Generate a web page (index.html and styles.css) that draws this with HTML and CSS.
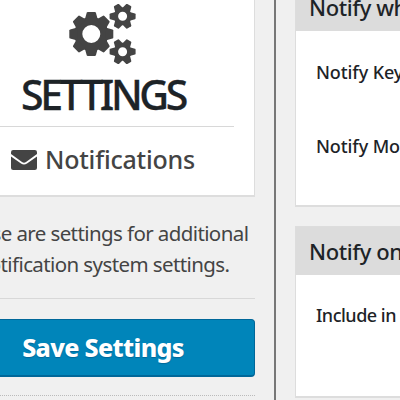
FILE: index.html
```html
<!DOCTYPE html>
<html lang="en">
<head>
    <meta charset="UTF-8">
    <meta name="viewport" content="width=device-width, initial-scale=1.0">
    <title>Settings - Notifications</title>
    <link rel="stylesheet" href="styles.css">
</head>
<body>
    <div class="sidebar">
        <div class="card">
            <svg class="cogs" width="68" height="62" viewBox="0 0 68 62">
                <defs>
                    <path id="tooth-lg" d="M-6.6 -14 L-4.6 -21.2 Q-4.3 -22 -3.5 -22 H3.5 Q4.3 -22 4.6 -21.2 L6.6 -14 Z"/>
                    <path id="tooth-sm" d="M-4.4 -7 L-2.9 -12.4 Q-2.7 -13 -2 -13 H2 Q2.7 -13 2.9 -12.4 L4.4 -7 Z"/>
                    <g id="cog-sm">
                        <circle r="6.7" fill="none" stroke="#444" stroke-width="4.4"/>
                        <use href="#tooth-sm" transform="rotate(30)"/>
                        <use href="#tooth-sm" transform="rotate(90)"/>
                        <use href="#tooth-sm" transform="rotate(150)"/>
                        <use href="#tooth-sm" transform="rotate(210)"/>
                        <use href="#tooth-sm" transform="rotate(270)"/>
                        <use href="#tooth-sm" transform="rotate(330)"/>
                    </g>
                </defs>
                <g fill="#444">
                    <g transform="translate(22.3 31)">
                        <circle r="13" fill="none" stroke="#444" stroke-width="8"/>
                        <use href="#tooth-lg"/>
                        <use href="#tooth-lg" transform="rotate(45)"/>
                        <use href="#tooth-lg" transform="rotate(90)"/>
                        <use href="#tooth-lg" transform="rotate(135)"/>
                        <use href="#tooth-lg" transform="rotate(180)"/>
                        <use href="#tooth-lg" transform="rotate(225)"/>
                        <use href="#tooth-lg" transform="rotate(270)"/>
                        <use href="#tooth-lg" transform="rotate(315)"/>
                    </g>
                    <use href="#cog-sm" transform="translate(53.6 13.3)"/>
                    <use href="#cog-sm" transform="translate(53.6 48.7)"/>
                </g>
            </svg>
            <h1 class="title">SETTINGS</h1>
            <h2 class="subtitle">
                <svg class="envelope" width="26" height="20" viewBox="0 0 26 20">
                    <path fill="#444" d="M2.2 0 H23.8 Q26 0 26 2.2 V4 L15 12 Q13 13.4 11 12 L0 4 V2.2 Q0 0 2.2 0 Z"/>
                    <path fill="#444" d="M0 6.6 L10 13.6 Q13 15.6 16 13.6 L26 6.6 V18 Q26 20 23.8 20 H2.2 Q0 20 0 18 Z"/>
                </svg>
                <span>Notifications</span>
            </h2>
        </div>
        <p class="description">These are settings for additional<br>notification system settings.</p>
        <div class="actions">
            <button class="save-button">Save Settings</button>
        </div>
    </div>

    <div class="main">
        <div class="panel">
            <h3 class="panel-title">Notify when</h3>
            <div class="panel-body">
                <div class="row">Notify Keymaster</div>
                <div class="row">Notify Moderator</div>
            </div>
        </div>
        <div class="panel">
            <h3 class="panel-title">Notify on</h3>
            <div class="panel-body short">
                <div class="row">Include in</div>
            </div>
        </div>
    </div>
</body>
</html>
```

FILE: styles.css
```css
* {
    margin: 0;
    padding: 0;
    box-sizing: border-box;
}

body {
    font-family: "Noto Sans", "Open Sans", sans-serif;
    height: 400px;
    display: flex;
    background-color: #f0f0f0;
    color: #444;
    overflow: hidden;
}

.sidebar {
    width: 325px;
    height: 400px;
    margin-left: -49px;
    padding-right: 19px;
    border-right: 2px solid #777;
    flex-shrink: 0;
}

.card {
    height: 197px;
    padding: 3px 20px 0;
    background-color: #fff;
    border: 2px solid #ddd;
    border-width: 0 1px 2px;
    text-align: center;
}

.cogs {
    display: block;
    margin: 0 auto;
}

.title {
    height: 62px;
    border-bottom: 1px solid #d8d8d8;
    color: #1d2327;
    font-size: 41px;
    font-weight: 500;
    line-height: 59px;
    letter-spacing: -3.4px;
    white-space: nowrap;
    -webkit-text-stroke: 0.3px #1d2327;
}

.subtitle {
    display: flex;
    justify-content: center;
    align-items: center;
    gap: 8px;
    height: 65px;
    font-size: 25px;
    font-weight: 500;
    line-height: 32px;
    letter-spacing: -0.2px;
    white-space: nowrap;
}

.subtitle span {
    margin-top: -2px;
}

.description {
    height: 102px;
    padding-top: 21px;
    border-bottom: 1px solid #d8d8d8;
    font-size: 20.5px;
    line-height: 31px;
    letter-spacing: -0.6px;
    text-align: center;
    white-space: nowrap;
}

.actions {
    height: 97px;
    padding-top: 20px;
    border-bottom: 1px dotted #bbb;
}

.save-button {
    display: block;
    width: 100%;
    height: 58px;
    padding-bottom: 1px;
    background-color: #0085ba;
    border: 1px solid #006799;
    border-bottom-width: 2px;
    border-radius: 4px;
    color: #fff;
    font-family: inherit;
    font-size: 25px;
    font-weight: 800;
    letter-spacing: -0.65px;
    text-shadow: 0 1px 1px #006799;
}

.main {
    padding-left: 19px;
    flex-shrink: 0;
}

.panel {
    width: 400px;
    margin-bottom: 19px;
    background-color: #fff;
    border: 1px solid #ddd;
    border-bottom-width: 2px;
}

.panel-title {
    height: 48px;
    padding-left: 13px;
    background-color: #dcdcdc;
    color: #1d2327;
    font-size: 22px;
    font-weight: 500;
    line-height: 49px;
    letter-spacing: -0.4px;
}

.panel:first-child {
    margin-top: -18px;
}

.panel-body {
    height: 174px;
    padding: 4px 0 0 20px;
}

.panel-body.short {
    height: 121px;
    padding-top: 3px;
}

.row {
    height: 74px;
    color: #1d2327;
    font-size: 18px;
    font-weight: 500;
    line-height: 74px;
    letter-spacing: -0.1px;
}

.short .row {
    letter-spacing: -0.5px;
}
```
